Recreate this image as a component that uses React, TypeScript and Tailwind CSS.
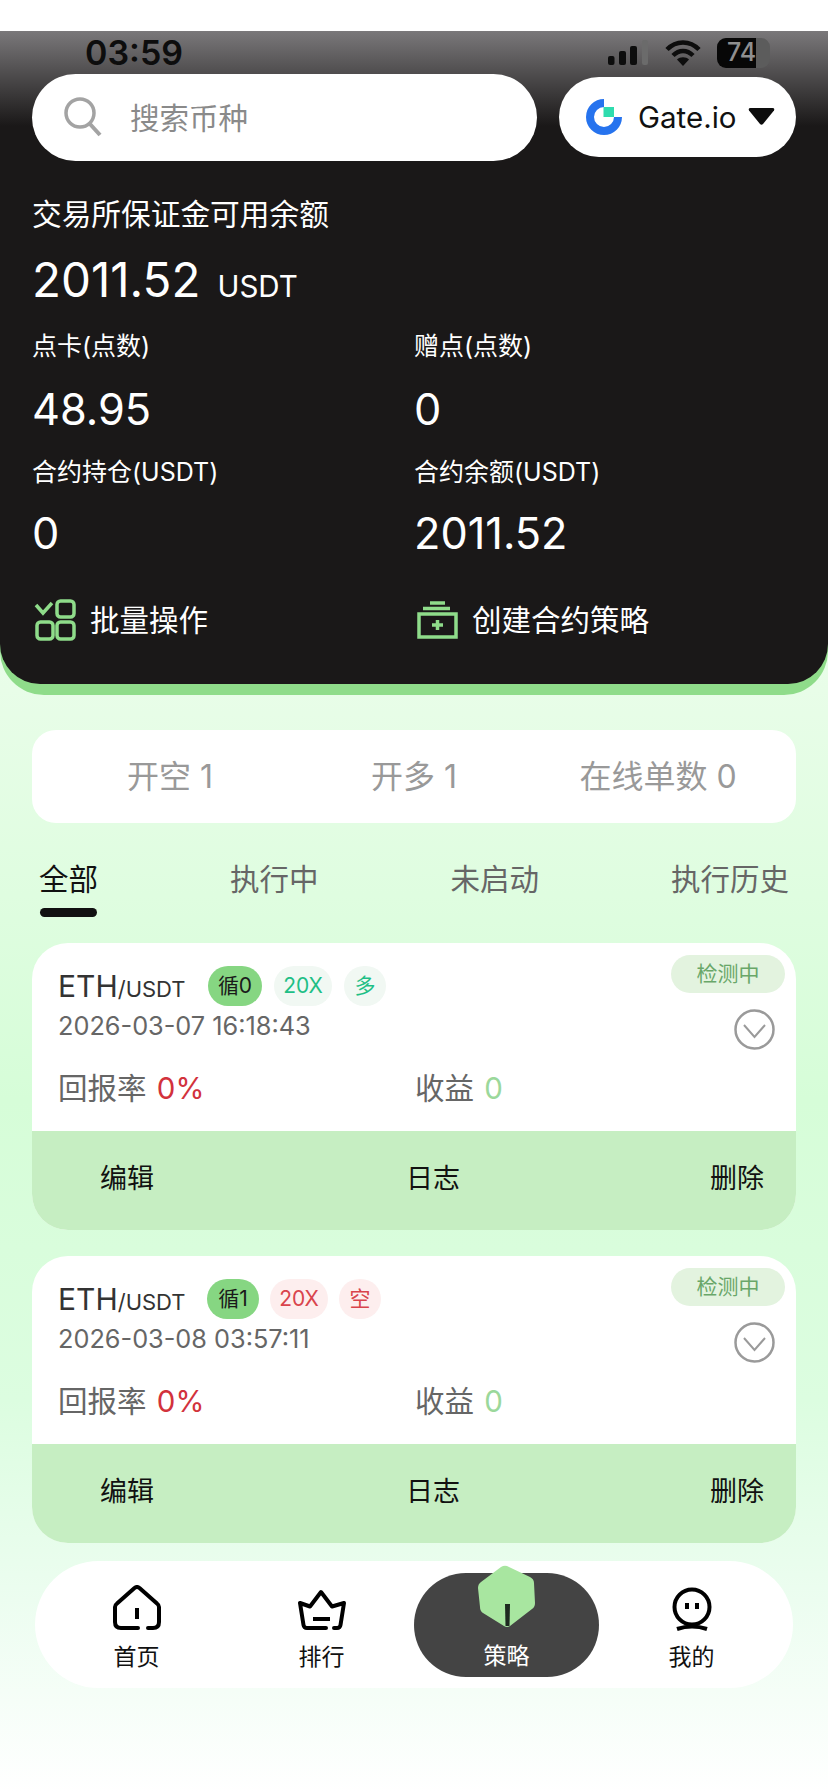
const cards = [
  { pair: 'ETH', loop: '循0', lev: '20X', side: '多', time: '2026-03-07 16:18:43', short: false },
  { pair: 'ETH', loop: '循1', lev: '20X', side: '空', time: '2026-03-08 03:57:11', short: true },
];

function StatusBar() {
  return (
    <div className="flex h-[43px] items-center justify-between pl-[85px] pr-[58px]">
      <span className="text-[34px] leading-none font-semibold text-[#0d0d0d]">03:59</span>
      <div className="flex items-center">
        <svg width="42" height="26" viewBox="0 0 42 26">
          <rect x="0" y="16" width="6.500" height="9" rx="2" fill="#0d0d0d" />
          <rect x="11" y="11" width="7" height="14" rx="2" fill="#0d0d0d" />
          <rect x="22" y="6" width="7" height="19" rx="2" fill="#0d0d0d" />
          <rect x="34" y="0" width="6" height="25" rx="2" fill="#6b6b6b" />
        </svg>
        <svg className="ml-[15px]" width="36" height="26" viewBox="0 0 36 26" fill="none" stroke="#0d0d0d" strokeWidth="4.500">
          <path d="M2 9.500c9-9.500 23-9.500 32 0" />
          <path d="M8 15.500c6-6 14-6 20 0" />
          <path d="M18 26l-6-6.500c3-3 9-3 12 0z" fill="#0d0d0d" stroke="none" />
        </svg>
        <div className="relative ml-[16px] flex h-[30px] w-[53px] items-center overflow-hidden rounded-[9px] bg-[#5c5c5c]">
          <div className="absolute inset-y-0 left-0 w-[39px] bg-[#070707]" />
          <span className="relative ml-[10px] text-[25px] leading-none font-medium text-[#8f8f8f]">74</span>
        </div>
      </div>
    </div>
  );
}

function GateLogo() {
  return (
    <svg width="36" height="36" viewBox="0 0 36 36">
      <path d="M18 0v8a10 10 0 1 0 10 10h8A18 18 0 1 1 18 0z" fill="#2673ee" />
      <rect x="17.500" y="8" width="10.500" height="10" fill="#2fdcae" />
    </svg>
  );
}

function BatchIcon() {
  return (
    <svg width="42" height="42" viewBox="0 0 42 42" fill="none" stroke="#8fdc8a" strokeWidth="3.500">
      <path d="M2 6l7 8 9-10" />
      <rect x="23" y="2" width="17" height="16" rx="3.500" />
      <rect x="3" y="23" width="16" height="17" rx="3.500" />
      <rect x="23" y="23" width="17" height="17" rx="3.500" />
    </svg>
  );
}

function CreateIcon() {
  return (
    <svg width="42" height="40" viewBox="0 0 42 40" fill="none" stroke="#8fdc8a" strokeWidth="3.500">
      <path d="M13 3h15M6 8.500h27" />
      <rect x="2" y="14" width="37" height="23" />
      <path d="M20.500 20v10M15 25h11" />
    </svg>
  );
}

function Badge({ children, className }: { children: React.ReactNode; className: string }) {
  return (
    <span className={`flex h-[40px] items-center justify-center rounded-full text-[21px] ${className}`}>{children}</span>
  );
}

function StrategyCard({ card }: { card: (typeof cards)[number] }) {
  const tone = card.short ? 'bg-[#fdeeee] text-[#d9444c]' : 'bg-[#f1f8f3] text-[#1fbf86]';
  return (
    <div className="relative overflow-hidden rounded-[36px] bg-white">
      <span className="absolute top-[12px] right-[11px] flex h-[38px] w-[114px] items-center justify-center rounded-full bg-[#e3f3df] text-[21px] text-[#69a769]">
        检测中
      </span>
      <svg className="absolute top-[66px] right-[21px]" width="41" height="41" viewBox="0 0 41 41" fill="none" stroke="#9a9a9a" strokeWidth="2.500">
        <circle cx="20.500" cy="20.500" r="19" />
        <path d="M10 16l10.500 12L31 16" strokeWidth="2" />
      </svg>
      <div className="h-[188px] pl-[26px]">
        <div className="flex h-[40px] translate-y-[23px] items-center">
          <span className={card.short ? 'w-[149px] text-[#333]' : 'w-[150px] text-[#333]'}>
            <span className="text-[30px]">{card.pair}</span>
            <span className="text-[22px]">/USDT</span>
          </span>
          <Badge className={`${card.short ? 'w-[52px]' : 'w-[54px]'} bg-[#86d682] text-[#1a1a1a]`}>{card.loop}</Badge>
          <Badge className={`${card.short ? 'ml-[11px]' : 'ml-[12px]'} w-[58px] ${tone}`}>{card.lev}</Badge>
          <Badge className={`${card.short ? 'ml-[11px]' : 'ml-[12px]'} w-[42px] ${tone}`}>{card.side}</Badge>
        </div>
        <p className="mt-[27px] h-[32px] text-[25.300px] leading-[32px] text-[#666]">{card.time}</p>
        <div className="mt-[26px] flex h-[40px] items-center text-[29.500px] text-[#666]">
          <div className="w-[357px]">
            回报率 <span className="ml-[2px] text-[#d2323c]">0%</span>
          </div>
          <div>
            收益 <span className="ml-[2px] text-[#9bd89b]">0</span>
          </div>
        </div>
      </div>
      <div className="flex h-[99px] items-center justify-between bg-[#c6eec2] pr-[32px] pb-[2px] pl-[68px] text-[27px] text-[#111]">
        <span>编辑</span>
        <span className="ml-[2px]">日志</span>
        <span>删除</span>
      </div>
    </div>
  );
}

const navItems = [
  {
    label: '首页',
    icon: (
      <svg width="50" height="46" viewBox="0 0 50 46" fill="none" stroke="#000" strokeWidth="4" strokeLinecap="round" strokeLinejoin="round">
        <path d="M26 43H9q-6 0-6-6V22q0-2 2-3.500L22.500 3q2.500-2 5 0L45 18.500q2 1.500 2 3.500v15q0 6-6 6h-5" />
        <path d="M25 23v11" strokeLinecap="butt" />
      </svg>
    ),
  },
  {
    label: '排行',
    icon: (
      <svg width="48" height="42" viewBox="0 0 48 42" fill="none" stroke="#000" strokeWidth="4" strokeLinecap="round" strokeLinejoin="round">
        <path d="M28 39H9q-3 0-3.500-3L2 14l10 3.500L23 3l11 14.500L46 14l-3.500 22q-.5 3-3.500 3h-3" />
        <path d="M15 30h17" strokeLinecap="butt" />
      </svg>
    ),
  },
  { label: '策略', active: true },
  {
    label: '我的',
    icon: (
      <svg width="40" height="44" viewBox="0 0 40 44" fill="none" stroke="#000" strokeWidth="4">
        <circle cx="20" cy="20" r="17.500" />
        <path d="M5 42q15-5 30 0" />
        <path d="M15 16v6M25 16v6" strokeWidth="4" />
      </svg>
    ),
  },
];

export default function App() {
  return (
    <div className="relative h-[1792px] w-[828px] overflow-hidden bg-[linear-gradient(180deg,#ffffff_0px,#ffffff_31px,#e8fde8_690px,#d6fdd8_1100px,#dcfde0_1400px,#ecfdf0_1600px,#ffffff_1792px)] font-[Inter,'Noto_Sans_CJK_SC',sans-serif]">
      <div className="pt-[31px]">
        <div className="rounded-b-[44px] bg-[#8fdc8a] pb-[11px]">
          <div className="rounded-b-[40px] bg-[linear-gradient(180deg,#7a787a_0px,#1a1818_95px)] pb-[39px] text-white">
            <StatusBar />
            <div className="px-[32px]">
              <div className="flex h-[86px] items-center gap-[22px]">
                <div className="flex h-[87px] w-[505px] items-center rounded-full bg-white pl-[32px]">
                  <svg width="38" height="40" viewBox="0 0 38 40" fill="none" stroke="#a3a3a3" strokeWidth="3.500">
                    <circle cx="16" cy="16" r="14" />
                    <path d="M26 27l10 11" strokeWidth="4" />
                  </svg>
                  <span className="ml-[28px] pt-[3px] text-[29.500px] text-[#8a8a8a]">搜索币种</span>
                </div>
                <div className="flex h-[80px] w-[237px] items-center rounded-full bg-white pl-[27px]">
                  <GateLogo />
                  <span className="ml-[16px] text-[29.500px] text-[#111]">Gate.io</span>
                  <svg className="mb-[2px] ml-[12px]" width="27" height="17" viewBox="0 0 27 17">
                    <path d="M2.500 0h22q2.500 0 1.500 2.500L15 16q-1.500 1.500-3 0L1 2.500Q0 0 2.500 0z" fill="#0d0d0d" />
                  </svg>
                </div>
              </div>
              <p className="mt-[34px] text-[29.700px] leading-[40px]">交易所保证金可用余额</p>
              <div className="mt-[16px] flex h-[60px] items-baseline">
                <span className="text-[47.500px] leading-[60px]">2011.52</span>
                <span className="ml-[17px] text-[29.500px]">USDT</span>
              </div>
              <div className="grid grid-cols-2">
                <div>
                  <p className="mt-[16px] text-[25px] leading-[40px]">点卡(点数)</p>
                  <p className="mt-[18px] text-[43.300px] leading-[50px]">48.95</p>
                  <p className="mt-[18px] text-[25px] leading-[40px]">合约持仓(USDT)</p>
                  <p className="mt-[16px] text-[43.300px] leading-[50px]">0</p>
                </div>
                <div>
                  <p className="mt-[16px] text-[25px] leading-[40px]">赠点(点数)</p>
                  <p className="mt-[18px] text-[43.300px] leading-[50px]">0</p>
                  <p className="mt-[18px] text-[25px] leading-[40px]">合约余额(USDT)</p>
                  <p className="mt-[16px] text-[43.300px] leading-[50px]">2011.52</p>
                </div>
              </div>
              <div className="mt-[37px] grid h-[50px] grid-cols-2 items-center text-[29.500px]">
                <div className="flex items-center pl-[2px]">
                  <BatchIcon />
                  <span className="ml-[14px]">批量操作</span>
                </div>
                <div className="flex items-center pl-[3px]">
                  <CreateIcon />
                  <span className="ml-[13px]">创建合约策略</span>
                </div>
              </div>
            </div>
          </div>
        </div>
      </div>

      <div className="px-[32px]">
        <div className="mt-[35px] grid h-[93px] grid-cols-3 items-center rounded-[24px] bg-white px-[16px] text-center text-[32px] text-[#999]">
          <span>开空 1</span>
          <span>开多 1</span>
          <span>在线单数 0</span>
        </div>
        <div className="mt-[36px] flex items-start justify-between pr-[7px] pl-[7px] text-[29.500px] text-[#666]">
          <div className="flex flex-col items-center">
            <span className="leading-[40px] text-[#111]">全部</span>
            <span className="mt-[9px] h-[9px] w-[57px] rounded-full bg-[#111]" />
          </div>
          <span className="leading-[40px]">执行中</span>
          <span className="leading-[40px]">未启动</span>
          <span className="leading-[40px]">执行历史</span>
        </div>
        <div className="mt-[26px] flex flex-col gap-[26px]">
          {cards.map((c) => (
            <StrategyCard key={c.time} card={c} />
          ))}
        </div>
      </div>

      <div className="mx-[35px] mt-[18px] grid h-[127px] w-[758px] grid-cols-4 rounded-[64px] bg-white pr-[9px] pl-[9px]">
        {navItems.map((item) =>
          item.active ? (
            <div key={item.label} className="relative flex flex-col items-center">
              <div className="absolute top-[12px] h-[104px] w-[185px] rounded-full bg-[#444]" />
              <svg className="relative mt-[4px]" width="60" height="63" viewBox="0 0 60 63">
                <path d="M24 2q4-2.500 8 0l21 10q4 2 4 6l1 20q0 4-3 6L33 61q-3 2-6 0L6 48q-3-2-3-6L1 23q0-4 3-6z" fill="#a8e6a0" />
                <path d="M28 39h5l-.5 22h-4z" fill="#1e2a20" />
              </svg>
              <span className="relative mt-[13px] text-[23px] leading-[30px] text-white">{item.label}</span>
            </div>
          ) : (
            <div key={item.label} className="flex flex-col items-center">
              <div className="mt-[22px] flex h-[48px] items-end">{item.icon}</div>
              <span className="mt-[11px] text-[23px] leading-[30px] text-[#111]">{item.label}</span>
            </div>
          ),
        )}
      </div>
    </div>
  );
}
